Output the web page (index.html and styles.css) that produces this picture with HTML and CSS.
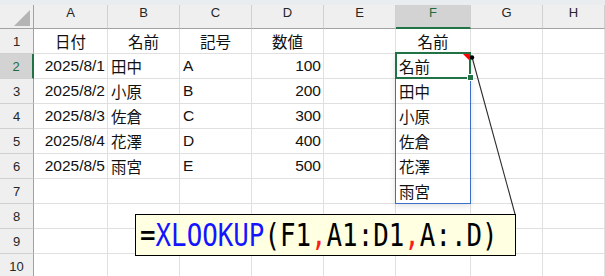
FILE: index.html
```html
<!DOCTYPE html>
<html lang="ja">
<head>
<meta charset="utf-8">
<title>XLOOKUP</title>
<link rel="stylesheet" href="styles.css">
</head>
<body>
<div class="page">
  <div class="topbar"></div>
  <div class="sheet">
    <div class="corner"></div>
    <div class="h">A</div><div class="h">B</div><div class="h">C</div><div class="h">D</div><div class="h">E</div><div class="h sel">F</div><div class="h">G</div><div class="h">H</div>

    <div class="r">1</div>
    <div class="c ctr">日付</div><div class="c ctr">名前</div><div class="c ctr">記号</div><div class="c ctr">数値</div><div class="c"></div><div class="c ctr">名前</div><div class="c"></div><div class="c"></div>

    <div class="r sel">2</div>
    <div class="c num">2025/8/1</div><div class="c">田中</div><div class="c">A</div><div class="c num">100</div><div class="c"></div><div class="c">名前</div><div class="c"></div><div class="c"></div>

    <div class="r">3</div>
    <div class="c num">2025/8/2</div><div class="c">小原</div><div class="c">B</div><div class="c num">200</div><div class="c"></div><div class="c">田中</div><div class="c"></div><div class="c"></div>

    <div class="r">4</div>
    <div class="c num">2025/8/3</div><div class="c">佐倉</div><div class="c">C</div><div class="c num">300</div><div class="c"></div><div class="c">小原</div><div class="c"></div><div class="c"></div>

    <div class="r">5</div>
    <div class="c num">2025/8/4</div><div class="c">花澤</div><div class="c">D</div><div class="c num">400</div><div class="c"></div><div class="c">佐倉</div><div class="c"></div><div class="c"></div>

    <div class="r">6</div>
    <div class="c num">2025/8/5</div><div class="c">雨宮</div><div class="c">E</div><div class="c num">500</div><div class="c"></div><div class="c">花澤</div><div class="c"></div><div class="c"></div>

    <div class="r">7</div>
    <div class="c"></div><div class="c"></div><div class="c"></div><div class="c"></div><div class="c"></div><div class="c">雨宮</div><div class="c"></div><div class="c"></div>

    <div class="r">8</div>
    <div class="c"></div><div class="c"></div><div class="c"></div><div class="c"></div><div class="c"></div><div class="c"></div><div class="c"></div><div class="c"></div>

    <div class="r">9</div>
    <div class="c"></div><div class="c"></div><div class="c"></div><div class="c"></div><div class="c"></div><div class="c"></div><div class="c"></div><div class="c"></div>

    <div class="r">10</div>
    <div class="c"></div><div class="c"></div><div class="c"></div><div class="c"></div><div class="c"></div><div class="c"></div><div class="c"></div><div class="c"></div>

    <div class="spill"></div>
    <div class="selbox"></div>
    <div class="handle"></div>
  </div>

  <svg class="marks" width="605" height="276" viewBox="0 0 605 276">
    <polygon points="463,54 469,54 469,60" fill="#ff0000"/>
    <line x1="472" y1="57" x2="515" y2="214" stroke="#2a2a2a" stroke-width="1.1"/>
    <circle cx="472" cy="57.5" r="2.2" fill="#000"/>
  </svg>

  <div class="callout"><span class="formula">=<span class="fn">XLOOKUP</span>(F1<span class="sep">,</span>A1:D1<span class="sep">,</span>A:.D)</span></div>
</div>
</body>
</html>
```

FILE: styles.css
```css
html, body {
  margin: 0;
  padding: 0;
  background: #ffffff;
}

.page {
  position: relative;
  width: 605px;
  height: 276px;
  overflow: hidden;
  font-family: "Liberation Sans", "Noto Sans CJK JP", sans-serif;
}

.topbar {
  height: 5px;
  background: #eaedf0;
}

.sheet {
  position: relative;
  display: grid;
  grid-template-columns: 34px 74px 72px 72px 72px 72px 75px 72px 1fr;
  grid-template-rows: 24px;
  grid-auto-rows: 25px;
}

.corner {
  box-sizing: border-box;
  background: #efefef;
  border-right: 1px solid #a2a2a2;
  border-bottom: 1px solid #a2a2a2;
  display: flex;
  justify-content: flex-end;
  align-items: flex-end;
  padding: 0 3px 2px 0;
}

.corner::after {
  content: "";
  width: 16px;
  height: 16px;
  background: #b4b4b4;
  clip-path: polygon(100% 0, 100% 100%, 0 100%);
}

.h {
  box-sizing: border-box;
  background: #efefef;
  border-right: 1px solid #d0d0d0;
  border-bottom: 1px solid #a2a2a2;
  font-size: 13px;
  line-height: 15px;
  color: #262626;
  text-align: center;
  padding-top: 0;
}

.h.sel {
  background: #d3d3d3;
  border-bottom: 2px solid #217346;
  color: #1d6b3f;
}

.r {
  box-sizing: border-box;
  background: #efefef;
  border-right: 1px solid #a2a2a2;
  border-bottom: 1px solid #d0d0d0;
  font-size: 13px;
  color: #262626;
  display: flex;
  align-items: center;
  justify-content: center;
}

.r.sel {
  background: #d3d3d3;
  border-right: 2px solid #217346;
  color: #1d6b3f;
}

.c {
  box-sizing: border-box;
  border-right: 1px solid #e0e0e0;
  border-bottom: 1px solid #e0e0e0;
  font-size: 15.5px;
  color: #111;
  display: flex;
  align-items: center;
  padding: 0 3px;
  white-space: nowrap;
  overflow: hidden;
}

.c.ctr {
  justify-content: center;
}

.c.num {
  justify-content: flex-end;
  padding-right: 2px;
}

.spill {
  position: absolute;
  left: 395px;
  top: 48px;
  width: 76px;
  height: 151px;
  box-sizing: border-box;
  border: 1px solid #3b6fc9;
  box-shadow: 0 2px 6px rgba(0, 0, 0, 0.12);
}

.selbox {
  position: absolute;
  left: 395px;
  top: 47px;
  width: 76px;
  height: 27px;
  box-sizing: border-box;
  border: 2px solid #217346;
}

.handle {
  position: absolute;
  left: 467px;
  top: 69px;
  width: 7px;
  height: 7px;
  box-sizing: border-box;
  background: #217346;
  border: 1px solid #ffffff;
}

.marks {
  position: absolute;
  left: 0;
  top: 0;
  pointer-events: none;
}

.callout {
  position: absolute;
  left: 135px;
  top: 214px;
  width: 381px;
  height: 42px;
  box-sizing: border-box;
  border: 1px solid #000;
  background: #ffffe1;
  display: flex;
  align-items: center;
  padding-left: 4px;
  overflow: visible;
}

.formula {
  display: inline-block;
  font-family: "DejaVu Sans Mono", "Liberation Mono", monospace;
  font-size: 32px;
  line-height: 32px;
  color: #000;
  white-space: nowrap;
  transform: scaleX(0.807);
  transform-origin: left center;
}

.fn {
  color: #1414ff;
}

.sep {
  color: #ff1a1a;
}
```
